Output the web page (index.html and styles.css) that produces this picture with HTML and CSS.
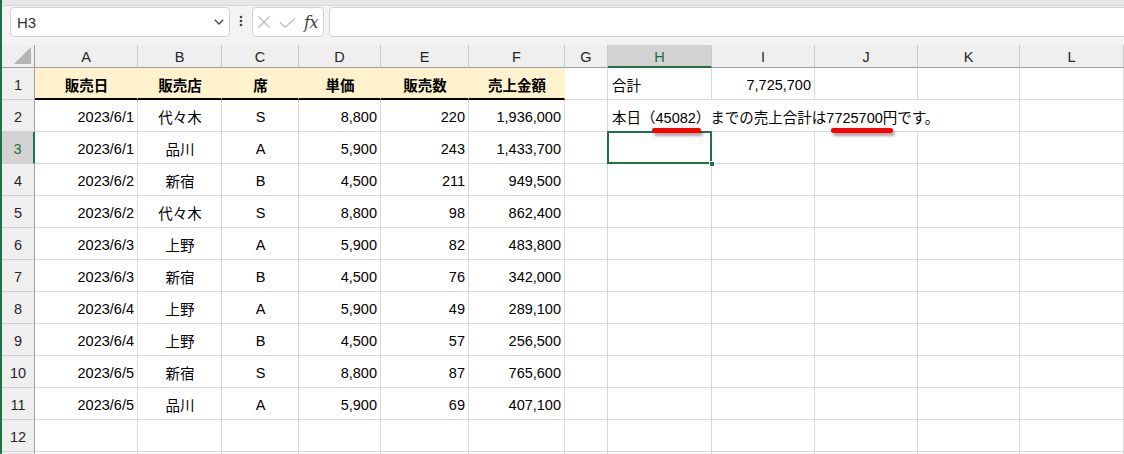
FILE: index.html
```html
<!DOCTYPE html>
<html lang="ja">
<head>
<meta charset="utf-8">
<title>Sheet</title>
<link rel="stylesheet" href="styles.css">
</head>
<body>
<div class="app">
  <div class="topstrip"></div>
  <div class="fbar">
    <div class="namebox">
      <span class="ref">H3</span>
      <svg class="chev" width="10" height="6" viewBox="0 0 10 6"><path d="M0.8 0.8 L5 5 L9.2 0.8" fill="none" stroke="#444" stroke-width="1.3"/></svg>
    </div>
    <div class="dots">
      <svg width="4" height="14" viewBox="0 0 4 14"><circle cx="2" cy="2" r="1.3" fill="#444"/><circle cx="2" cy="6" r="1.3" fill="#444"/><circle cx="2" cy="10" r="1.3" fill="#444"/></svg>
    </div>
    <div class="fxbox">
      <svg class="ic-x" width="14" height="12" viewBox="0 0 14 12"><path d="M1.5 0.5 L12.5 11.5 M12.5 0.5 L1.5 11.5" stroke="#bdbdbd" stroke-width="1.3" fill="none"/></svg>
      <svg class="ic-ok" width="17" height="10" viewBox="0 0 17 10"><path d="M0.8 4.2 L6 9.2 L16.2 0.6" stroke="#bdbdbd" stroke-width="1.3" fill="none"/></svg>
      <span class="fx">fx</span>
    </div>
    <div class="input"></div>
  </div>
  <div class="grid">
    <div class="corner"><svg width="17" height="17" viewBox="0 0 17 17"><polygon points="17,0 17,17 0,17" fill="#b5b5b5"/></svg></div>
    <div class="ch">A</div><div class="ch">B</div><div class="ch">C</div><div class="ch">D</div><div class="ch">E</div><div class="ch">F</div><div class="ch">G</div><div class="ch act">H</div><div class="ch">I</div><div class="ch">J</div><div class="ch">K</div><div class="ch">L</div>

    <div class="rh">1</div>
    <div class="c hd">販売日</div><div class="c hd">販売店</div><div class="c hd">席</div><div class="c hd">単価</div><div class="c hd">販売数</div><div class="c hd">売上金額</div>
    <div class="c"></div><div class="c">合計</div><div class="c r">7,725,700</div><div class="c"></div><div class="c"></div><div class="c"></div>

    <div class="rh">2</div>
    <div class="c r">2023/6/1</div><div class="c m">代々木</div><div class="c m">S</div><div class="c r">8,800</div><div class="c r">220</div><div class="c r">1,936,000</div>
    <div class="c"></div>
    <div class="c span4">本日（45082）までの売上合計は7725700円です。<span class="mark mark1"></span><span class="mark mark2"></span></div>
    <div class="c"></div>

    <div class="rh act">3</div>
    <div class="c r">2023/6/1</div><div class="c m">品川</div><div class="c m">A</div><div class="c r">5,900</div><div class="c r">243</div><div class="c r">1,433,700</div>
    <div class="c"></div><div class="c sel"><span class="handle"></span></div><div class="c"></div><div class="c"></div><div class="c"></div><div class="c"></div>

    <div class="rh">4</div>
    <div class="c r">2023/6/2</div><div class="c m">新宿</div><div class="c m">B</div><div class="c r">4,500</div><div class="c r">211</div><div class="c r">949,500</div>
    <div class="c"></div><div class="c"></div><div class="c"></div><div class="c"></div><div class="c"></div><div class="c"></div>

    <div class="rh">5</div>
    <div class="c r">2023/6/2</div><div class="c m">代々木</div><div class="c m">S</div><div class="c r">8,800</div><div class="c r">98</div><div class="c r">862,400</div>
    <div class="c"></div><div class="c"></div><div class="c"></div><div class="c"></div><div class="c"></div><div class="c"></div>

    <div class="rh">6</div>
    <div class="c r">2023/6/3</div><div class="c m">上野</div><div class="c m">A</div><div class="c r">5,900</div><div class="c r">82</div><div class="c r">483,800</div>
    <div class="c"></div><div class="c"></div><div class="c"></div><div class="c"></div><div class="c"></div><div class="c"></div>

    <div class="rh">7</div>
    <div class="c r">2023/6/3</div><div class="c m">新宿</div><div class="c m">B</div><div class="c r">4,500</div><div class="c r">76</div><div class="c r">342,000</div>
    <div class="c"></div><div class="c"></div><div class="c"></div><div class="c"></div><div class="c"></div><div class="c"></div>

    <div class="rh">8</div>
    <div class="c r">2023/6/4</div><div class="c m">上野</div><div class="c m">A</div><div class="c r">5,900</div><div class="c r">49</div><div class="c r">289,100</div>
    <div class="c"></div><div class="c"></div><div class="c"></div><div class="c"></div><div class="c"></div><div class="c"></div>

    <div class="rh">9</div>
    <div class="c r">2023/6/4</div><div class="c m">上野</div><div class="c m">B</div><div class="c r">4,500</div><div class="c r">57</div><div class="c r">256,500</div>
    <div class="c"></div><div class="c"></div><div class="c"></div><div class="c"></div><div class="c"></div><div class="c"></div>

    <div class="rh">10</div>
    <div class="c r">2023/6/5</div><div class="c m">新宿</div><div class="c m">S</div><div class="c r">8,800</div><div class="c r">87</div><div class="c r">765,600</div>
    <div class="c"></div><div class="c"></div><div class="c"></div><div class="c"></div><div class="c"></div><div class="c"></div>

    <div class="rh">11</div>
    <div class="c r">2023/6/5</div><div class="c m">品川</div><div class="c m">A</div><div class="c r">5,900</div><div class="c r">69</div><div class="c r">407,100</div>
    <div class="c"></div><div class="c"></div><div class="c"></div><div class="c"></div><div class="c"></div><div class="c"></div>

    <div class="rh">12</div>
    <div class="c"></div><div class="c"></div><div class="c"></div><div class="c"></div><div class="c"></div><div class="c"></div>
    <div class="c"></div><div class="c"></div><div class="c"></div><div class="c"></div><div class="c"></div><div class="c"></div>

    <div class="rh"></div>
    <div class="c"></div><div class="c"></div><div class="c"></div><div class="c"></div><div class="c"></div><div class="c"></div>
    <div class="c"></div><div class="c"></div><div class="c"></div><div class="c"></div><div class="c"></div><div class="c"></div>
  </div>
</div>
</body>
</html>
```

FILE: styles.css
```css
* { box-sizing: border-box; margin: 0; padding: 0; }

body {
  margin: 0;
  width: 1124px;
  height: 454px;
  overflow: hidden;
  background: #ffffff;
  font-family: "Liberation Sans", "Noto Sans CJK JP", sans-serif;
}

.app {
  width: 1124px;
  height: 454px;
  border-left: 2px solid #1e7145;
  background: #f3f3f3;
  overflow: hidden;
}

.topstrip {
  height: 6px;
  background: #e7e7e7;
  border-bottom: 1px solid #d8d8d8;
}

.fbar {
  display: flex;
  height: 39px;
  padding: 1px 0 8px 8px;
}

.namebox {
  width: 220px;
  height: 30px;
  background: #ffffff;
  border: 1px solid #d3d3d3;
  border-radius: 4px;
  display: flex;
  align-items: center;
  padding: 0 5px 0 6px;
}

.ref {
  font-size: 15px;
  color: #333333;
}

.chev { margin-left: auto; }

.dots {
  width: 22px;
  display: flex;
  align-items: center;
  justify-content: center;
  padding-bottom: 1px;
}

.fxbox {
  width: 72px;
  height: 30px;
  background: #ffffff;
  border: 1px solid #d3d3d3;
  border-radius: 4px;
  display: flex;
  align-items: center;
  padding-left: 4px;
}

.ic-x { margin-right: 8px; }
.ic-ok { margin-right: 8px; margin-top: 1px; }

.fx {
  font-family: "DejaVu Serif", "Liberation Serif", serif;
  font-style: italic;
  font-size: 16px;
  color: #3c3c3c;
  letter-spacing: -0.5px;
}

.input {
  flex: 1;
  height: 30px;
  margin-left: 5px;
  margin-right: -8px;
  background: #ffffff;
  border: 1px solid #d3d3d3;
  border-radius: 4px;
}

.grid {
  display: grid;
  grid-template-columns: 33px 103px 84px 77px 82px 88px 96px 43px 104px 103px 103px 102px 104px;
  grid-template-rows: 23px repeat(13, 32px);
  background: #ffffff;
  font-size: 14.5px;
  color: #000000;
}

.corner {
  background: #efefef;
  border-right: 1px solid #9f9f9f;
  border-bottom: 1px solid #9f9f9f;
  display: flex;
  align-items: flex-end;
  justify-content: flex-end;
  padding: 0 3px 3px 0;
}

.ch {
  background: #efefef;
  border-right: 1px solid #c9c9c9;
  border-bottom: 1px solid #9f9f9f;
  display: flex;
  align-items: center;
  justify-content: center;
  color: #262626;
  font-size: 14.5px;
  padding-top: 1px;
}

.ch.act {
  background: #d3d3d3;
  border-bottom: 2px solid #217346;
  color: #1d6b40;
  padding-top: 2px;
}

.rh {
  background: #efefef;
  border-right: 1px solid #9f9f9f;
  border-bottom: 1px solid #d0d0d0;
  display: flex;
  align-items: center;
  justify-content: center;
  color: #262626;
  font-size: 14.5px;
  padding-top: 2px;
}

.rh.act {
  background: #d3d3d3;
  border-right: 2px solid #217346;
  color: #1d6b40;
}

.c {
  border-right: 1px solid #d9d9d9;
  border-bottom: 1px solid #d9d9d9;
  display: flex;
  align-items: center;
  padding: 2px 3px 0 4px;
  white-space: nowrap;
}

.r { justify-content: flex-end; }
.m { justify-content: center; }

.hd {
  background: #fff2cc;
  border-right-color: #fff2cc;
  border-bottom: 2px solid #000000;
  justify-content: center;
  font-weight: bold;
  padding-top: 2px;
}

.span4 {
  grid-column: span 4;
  position: relative;
}

.mark {
  position: absolute;
  top: 28px;
  height: 5px;
  background: #ff0000;
  border-radius: 2px;
  box-shadow: 2px 3px 3px rgba(0, 0, 0, 0.35);
  z-index: 5;
}

.mark1 { left: 44px; width: 49px; }
.mark2 { left: 223px; width: 62px; }

.sel {
  position: relative;
  z-index: 2;
}

.sel::after {
  content: "";
  position: absolute;
  left: -1px;
  top: -1px;
  right: -1px;
  bottom: -1px;
  border: 2px solid #217346;
}

.handle {
  position: absolute;
  right: -4px;
  bottom: -4px;
  width: 6px;
  height: 6px;
  background: #217346;
  border: 1px solid #ffffff;
  z-index: 3;
}
```
